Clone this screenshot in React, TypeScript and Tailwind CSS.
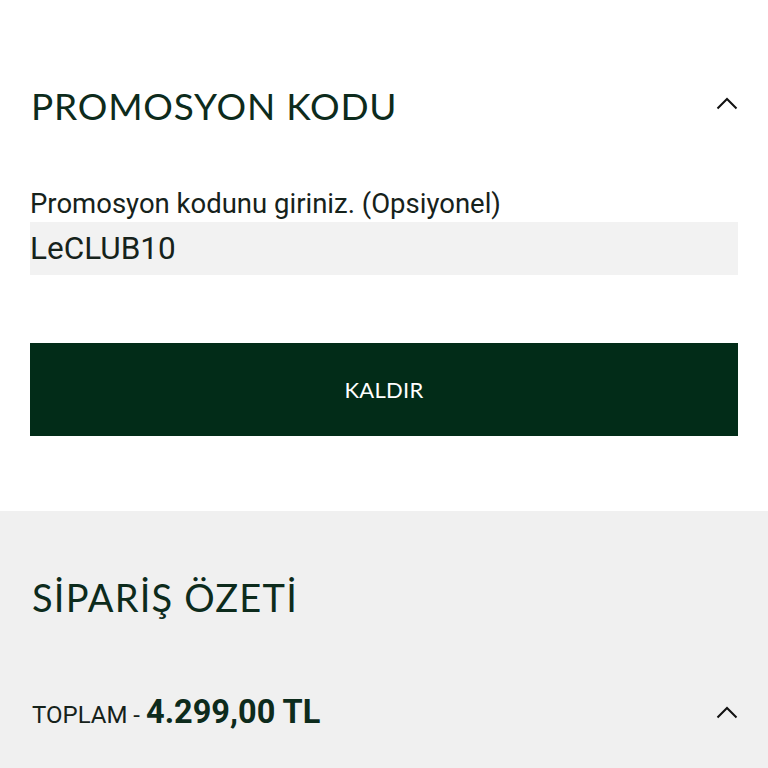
function Chevron() {
  return (
    <svg width="22" height="14" viewBox="0 0 22 14" fill="none" className="shrink-0">
      <path d="M1.5 12.5 L11 3 L20.5 12.5" stroke="#111" strokeWidth="2" />
    </svg>
  )
}

export default function App() {
  return (
    <div className="w-[768px] h-[768px] overflow-hidden bg-white font-['Lato',sans-serif] text-[#0d2b1c]">
      <section className="px-[30px] pt-[84px] pb-[75px]">
        <div className="flex items-center justify-between">
          <h2 className="text-[37px] leading-[44px] tracking-[0.8px] pl-[1px]">PROMOSYON KODU</h2>
          <div className="mt-[-6px]">
            <Chevron />
          </div>
        </div>

        <label className="block mt-[60px] font-['Roboto',sans-serif] text-[27.5px] leading-[32px] text-[#16221b]">
          Promosyon kodunu giriniz. (Opsiyonel)
        </label>
        <input
          type="text"
          defaultValue="LeCLUB10"
          className="block w-full h-[53px] mt-[2px] px-0 bg-[#f2f2f2] font-['Roboto',sans-serif] text-[31.5px] text-[#16221b] outline-none"
        />

        <button
          type="button"
          className="block w-full h-[93px] mt-[68px] bg-[#022c18] text-white text-[22px] tracking-[0.3px]"
        >
          KALDIR
        </button>
      </section>

      <section className="bg-[#f0f0f0] px-[30px] pt-[61px] h-[300px]">
        <h2 className="text-[38px] leading-[50px] tracking-[1.2px] pl-[2px]">SİPARİŞ ÖZETİ</h2>
        <div className="flex items-center justify-between mt-[66px]">
          <div className="flex items-baseline gap-[6px] pl-[2px]">
            <span className="font-['Roboto',sans-serif] text-[24px] text-[#16221b]">TOPLAM -</span>
            <span className="font-['Roboto',sans-serif] font-bold text-[32.5px] text-[#0d2b1c]">4.299,00 TL</span>
          </div>
          <Chevron />
        </div>
      </section>
    </div>
  )
}
